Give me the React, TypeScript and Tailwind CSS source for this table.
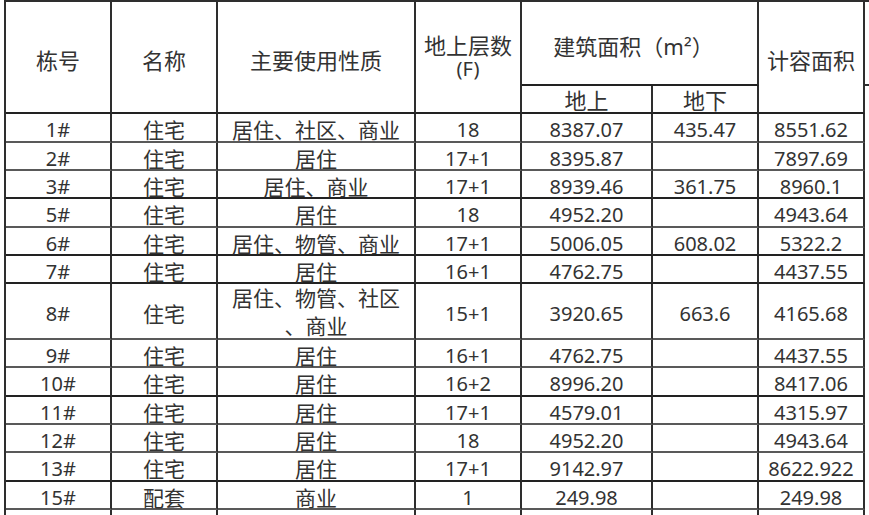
import React from "react";

type Row = {
  id: string;
  name: string;
  use: string[];
  f: string;
  up: string;
  down: string;
  far: string;
  h: string;
  b: string;
};

const THIN = "border-b-2 border-b-[#595959]";
const THICK = "border-b-2 border-b-[#222222]";

const rows: Row[] = [
  { id: "1#", name: "住宅", use: ["居住、社区、商业"], f: "18", up: "8387.07", down: "435.47", far: "8551.62", h: "h-[29px]", b: THIN },
  { id: "2#", name: "住宅", use: ["居住"], f: "17+1", up: "8395.87", down: "", far: "7897.69", h: "h-[28px]", b: THIN },
  { id: "3#", name: "住宅", use: ["居住、商业"], f: "17+1", up: "8939.46", down: "361.75", far: "8960.1", h: "h-[28px]", b: THICK },
  { id: "5#", name: "住宅", use: ["居住"], f: "18", up: "4952.20", down: "", far: "4943.64", h: "h-[29px]", b: THIN },
  { id: "6#", name: "住宅", use: ["居住、物管、商业"], f: "17+1", up: "5006.05", down: "608.02", far: "5322.2", h: "h-[28px]", b: THICK },
  { id: "7#", name: "住宅", use: ["居住"], f: "16+1", up: "4762.75", down: "", far: "4437.55", h: "h-[28px]", b: THICK },
  { id: "8#", name: "住宅", use: ["居住、物管、社区", "、商业"], f: "15+1", up: "3920.65", down: "663.6", far: "4165.68", h: "h-[56px]", b: THIN },
  { id: "9#", name: "住宅", use: ["居住"], f: "16+1", up: "4762.75", down: "", far: "4437.55", h: "h-[28px]", b: THIN },
  { id: "10#", name: "住宅", use: ["居住"], f: "16+2", up: "8996.20", down: "", far: "8417.06", h: "h-[29px]", b: THICK },
  { id: "11#", name: "住宅", use: ["居住"], f: "17+1", up: "4579.01", down: "", far: "4315.97", h: "h-[28px]", b: THIN },
  { id: "12#", name: "住宅", use: ["居住"], f: "18", up: "4952.20", down: "", far: "4943.64", h: "h-[28px]", b: THIN },
  { id: "13#", name: "住宅", use: ["居住"], f: "17+1", up: "9142.97", down: "", far: "8622.922", h: "h-[29px]", b: THICK },
  { id: "15#", name: "配套", use: ["商业"], f: "1", up: "249.98", down: "", far: "249.98", h: "h-[28px]", b: THIN },
];

const VR = "border-r-2 border-r-[#2e2e2e]";

function Cell({ w, b, cn, children }: { w: string; b: string; cn?: boolean; children?: React.ReactNode }) {
  return (
    <div
      className={`flex h-full shrink-0 items-center justify-center pt-[5px] leading-[20px] ${w} ${VR} ${b} ${
        cn ? "text-[21px]" : "text-[20px]"
      }`}
    >
      {children}
    </div>
  );
}

export default function App() {
  return (
    <div className="h-[515px] w-[869px] overflow-hidden bg-white pl-[4px] font-[family-name:'Noto_Sans','Noto_Sans_CJK_SC',sans-serif] text-[#333333]">
      <div className="flex flex-col border-l-2 border-t-2 border-l-[#2e2e2e] border-t-[#2e2e2e]">
        {/* header */}
        <div className="flex h-[112px] text-[22px]">
          <div className={`flex w-[106px] shrink-0 items-center justify-center pt-[5px] leading-[22px] ${VR} ${THICK}`}>栋号</div>
          <div className={`flex w-[106px] shrink-0 items-center justify-center pt-[5px] leading-[22px] ${VR} ${THICK}`}>名称</div>
          <div className={`flex w-[198px] shrink-0 items-center justify-center pt-[5px] leading-[22px] ${VR} ${THICK}`}>主要使用性质</div>
          <div className={`flex w-[106px] shrink-0 flex-col items-center justify-center leading-[23px] ${VR} ${THICK}`}>
            <span>地上层数</span>
            <span className="text-[20px]">(F)</span>
          </div>
          <div className="flex w-[237px] shrink-0 flex-col">
            <div className={`flex h-[84px] items-center justify-center pr-[12px] pt-[6px] leading-[22px] ${VR} ${THICK}`}>
              建筑面积（m²）
            </div>
            <div className="flex h-[28px]">
              <div className={`flex w-[131px] shrink-0 items-center justify-center pt-[2px] leading-[22px] ${VR} ${THICK}`}>地上</div>
              <div className={`flex w-[106px] shrink-0 items-center justify-center pt-[2px] leading-[22px] ${VR} ${THICK}`}>地下</div>
            </div>
          </div>
          <div className={`flex w-[106px] shrink-0 items-center justify-center pt-[6px] leading-[22px] ${VR} ${THICK}`}>计容面积</div>
          <div className="flex flex-1 flex-col">
            <div className="h-[84px] border-b-2 border-b-[#2e2e2e]" />
          </div>
        </div>

        {/* body */}
        {rows.map((r) => (
          <div key={r.id} className={`flex ${r.h}`}>
            <Cell w="w-[106px]" b={r.b}>{r.id}</Cell>
            <Cell w="w-[106px]" b={r.b} cn>{r.name}</Cell>
            <div
              className={`flex h-full w-[198px] shrink-0 flex-col items-center justify-center text-[21px] ${VR} ${r.b} ${
                r.use.length > 1 ? "pt-[1px] leading-[28px]" : "pt-[5px] leading-[20px]"
              }`}
            >
              {r.use.map((u) => (
                <span key={u}>{u}</span>
              ))}
            </div>
            <Cell w="w-[106px]" b={r.b}>{r.f}</Cell>
            <Cell w="w-[131px]" b={r.b}>{r.up}</Cell>
            <Cell w="w-[106px]" b={r.b}>{r.down}</Cell>
            <Cell w="w-[106px]" b={r.b}>{r.far}</Cell>
            <div className="flex-1" />
          </div>
        ))}

        {/* partial last row */}
        <div className="flex h-[40px]">
          <div className={`h-full w-[106px] shrink-0 ${VR}`} />
          <div className={`h-full w-[106px] shrink-0 ${VR}`} />
          <div className={`flex h-full w-[198px] shrink-0 justify-center pt-[2px] text-[21px] leading-[28px] ${VR}`}>
            居住、物管、社区
          </div>
          <div className={`h-full w-[106px] shrink-0 ${VR}`} />
          <div className={`h-full w-[131px] shrink-0 ${VR}`} />
          <div className={`h-full w-[106px] shrink-0 ${VR}`} />
          <div className={`h-full w-[106px] shrink-0 ${VR}`} />
          <div className="flex-1" />
        </div>
      </div>
    </div>
  );
}
